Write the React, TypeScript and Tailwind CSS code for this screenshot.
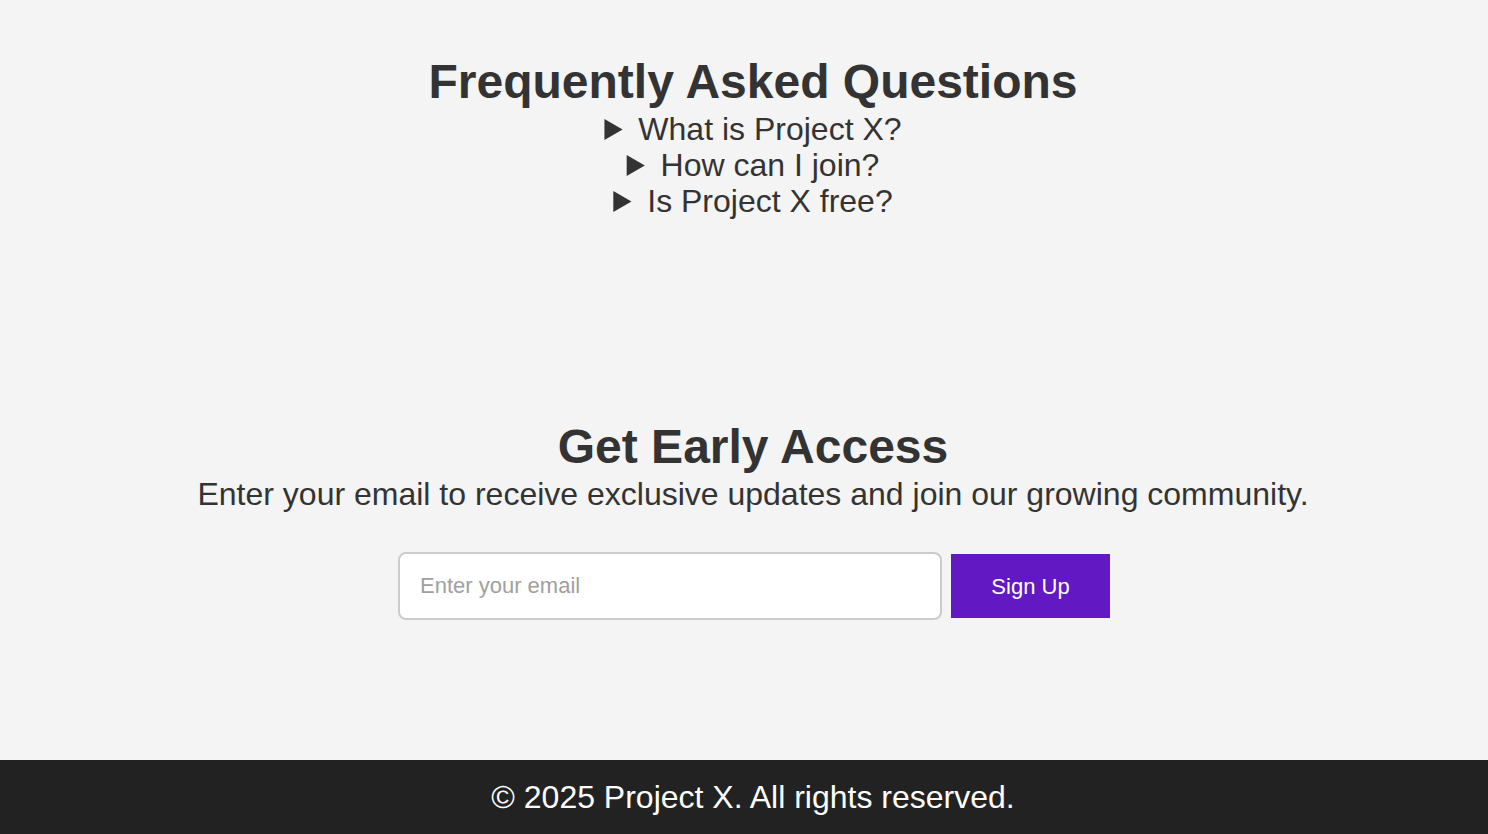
const faqs = ['What is Project X?', 'How can I join?', 'Is Project X free?'];

export default function App() {
  return (
    <div className="min-h-[834px] flex flex-col bg-[#f4f4f4] text-[#333] font-['Liberation_Sans',Arial,sans-serif]">
      <section className="pt-[53px] pl-[18px] text-center">
        <h2 className="text-[48px] leading-[58px] font-bold">Frequently Asked Questions</h2>
        <div className="text-[32px] leading-[36px]">
          {faqs.map((q) => (
            <details key={q}>
              <summary className="cursor-pointer">{q}</summary>
            </details>
          ))}
        </div>
      </section>

      <section className="mt-[199px] pl-[18px] text-center">
        <h2 className="text-[48px] leading-[58px] font-bold">Get Early Access</h2>
        <p className="text-[32px] leading-[36px]">
          Enter your email to receive exclusive updates and join our growing community.
        </p>
        <form className="mt-[40px] pl-[2px] flex justify-center items-center gap-[9px]" onSubmit={(e) => e.preventDefault()}>
          <input
            type="email"
            placeholder="Enter your email"
            className="w-[544px] h-[68px] px-[20px] bg-white border-2 border-[#ccc] rounded-[8px] text-[22px] outline-none placeholder:text-[#a0a0a0]"
          />
          <button type="submit" className="w-[159px] h-[64px] bg-[#6219c4] text-white text-[22px]">
            Sign Up
          </button>
        </form>
      </section>

      <footer className="mt-auto h-[74px] pl-[18px] flex items-center justify-center bg-[#222] text-white text-[32px]">
        © 2025 Project X. All rights reserved.
      </footer>
    </div>
  );
}
